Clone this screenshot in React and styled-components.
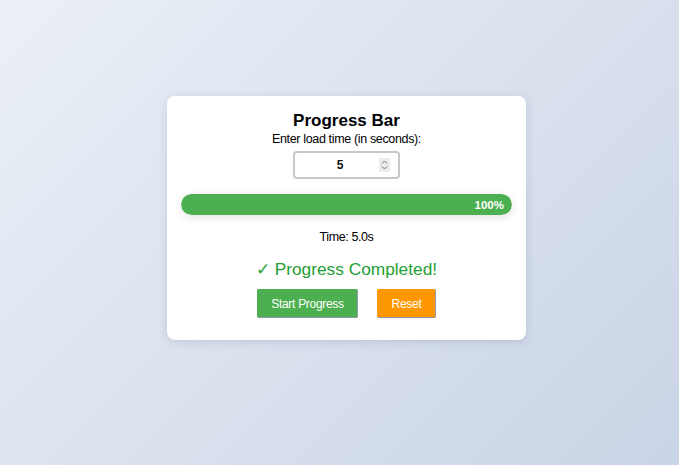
import React from "react";
import styled, { createGlobalStyle } from "styled-components";

const Global = createGlobalStyle`
  html, body { margin: 0; padding: 0; }
  body {
    width: 679px;
    height: 465px;
    overflow: hidden;
    font-family: "Liberation Sans", Arial, sans-serif;
    background: linear-gradient(135deg, #ebf0f7 0%, #dbe2ee 50%, #c9d4e6 100%);
  }
`;

const Page = styled.div`
  width: 679px;
  height: 465px;
  display: flex;
  justify-content: flex-start;
  padding: 96px 0 0 167px;
  box-sizing: border-box;
`;

const Card = styled.div`
  width: 359px;
  height: 244px;
  box-sizing: border-box;
  background: #fff;
  border-radius: 8px;
  box-shadow: 0 2px 10px rgba(60, 80, 120, 0.18);
  padding: 14px 14px 0;
  display: flex;
  flex-direction: column;
  align-items: center;
`;

const Title = styled.h2`
  margin: 0;
  font-size: 17px;
  line-height: 21px;
  font-weight: bold;
  color: #000;
`;

const Label = styled.div`
  font-size: 12.5px;
  letter-spacing: -0.35px;
  line-height: 16px;
  color: #000;
`;

const InputWrap = styled.div`
  position: relative;
  margin-top: 4px;
  width: 107px;
  height: 28px;
`;

const NumberInput = styled.input`
  width: 100%;
  height: 100%;
  box-sizing: border-box;
  border: 2px solid #c8c8c8;
  border-radius: 4px;
  text-align: center;
  font-family: "Liberation Sans", Arial, sans-serif;
  font-size: 12px;
  font-weight: bold;
  color: #111;
  background: #fff;
  padding: 0 13px 0 0;
  outline: none;
  -moz-appearance: textfield;
  &::-webkit-inner-spin-button,
  &::-webkit-outer-spin-button {
    -webkit-appearance: none;
    margin: 0;
  }
`;

const Spin = styled.svg`
  position: absolute;
  right: 10px;
  top: 7px;
`;

const Track = styled.div`
  margin-top: 15px;
  width: 331px;
  height: 21px;
  border-radius: 11px;
  background: #e6e6e6;
  box-shadow: 0 2px 8px rgba(0, 0, 0, 0.12);
  overflow: hidden;
`;

const Fill = styled.div`
  height: 100%;
  background: #4caf50;
  border-radius: 11px;
  display: flex;
  align-items: center;
  justify-content: flex-end;
  padding-right: 8px;
  box-sizing: border-box;
  color: #fff;
  font-size: 11.5px;
  font-weight: bold;
`;

const TimeText = styled.div`
  margin-top: 14px;
  font-size: 12.5px;
  letter-spacing: -0.4px;
  line-height: 16px;
  color: #000;
`;

const Done = styled.div`
  margin-top: 14px;
  font-size: 17.3px;
  line-height: 21px;
  color: #1f9e35;
`;

const Buttons = styled.div`
  margin-top: 9px;
  display: flex;
  gap: 19px;
`;

const Button = styled.button`
  height: 29px;
  width: ${(p) => p.$w}px;
  box-sizing: border-box;
  background: ${(p) => p.$bg};
  color: #fff;
  font-family: "Liberation Sans", Arial, sans-serif;
  font-size: 12px;
  letter-spacing: -0.3px;
  border-top: 1px solid ${(p) => p.$bg};
  border-left: 1px solid ${(p) => p.$bg};
  border-right: 1.5px solid #9096a3;
  border-bottom: 1.5px solid #9096a3;
  border-radius: 2px;
  padding: 0;
  cursor: pointer;
`;

export default function App() {
  return (
    <>
      <Global />
      <Page>
        <Card>
          <Title>Progress Bar</Title>
          <Label>Enter load time (in seconds):</Label>
          <InputWrap>
            <NumberInput type="number" defaultValue={5} />
            <Spin width="11" height="14" viewBox="0 0 11 14">
              <rect x="0" y="0" width="11" height="14" fill="#ececec" />
              <path d="M3 5.5 L5.5 3 L8 5.5" fill="none" stroke="#777" strokeWidth="1" />
              <path d="M3 8.5 L5.5 11 L8 8.5" fill="none" stroke="#777" strokeWidth="1" />
            </Spin>
          </InputWrap>
          <Track>
            <Fill style={{ width: "100%" }}>100%</Fill>
          </Track>
          <TimeText>Time: 5.0s</TimeText>
          <Done>✓ Progress Completed!</Done>
          <Buttons>
            <Button $bg="#4caf50" $w={101}>Start Progress</Button>
            <Button $bg="#ff9800" $w={59}>Reset</Button>
          </Buttons>
        </Card>
      </Page>
    </>
  );
}
